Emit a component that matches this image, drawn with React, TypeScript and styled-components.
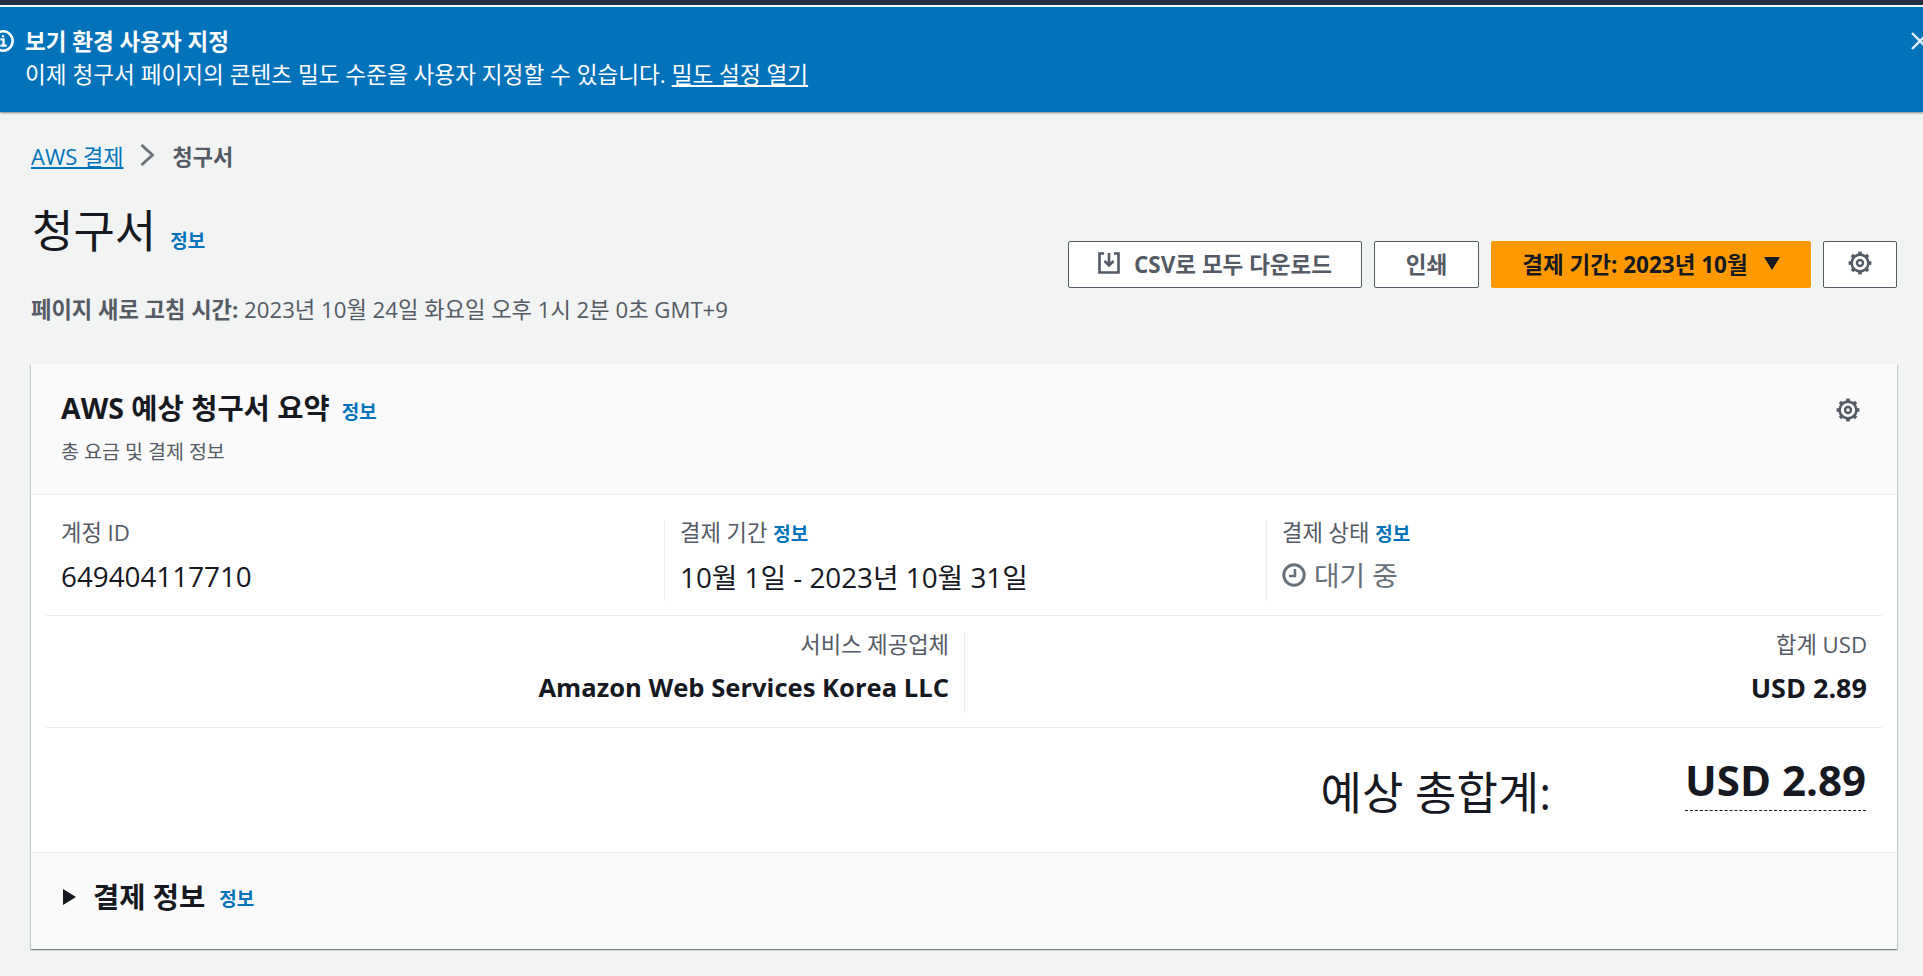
import React from 'react';
import styled, { createGlobalStyle } from 'styled-components';

const GlobalStyle = createGlobalStyle`
  html, body {
    margin: 0;
    padding: 0;
    height: 100%;
    background: #f2f3f3;
    overflow: hidden;
  }
  body {
    font-family: "Open Sans", "Noto Sans CJK KR", sans-serif;
    font-size: 17.5px;
    color: #16191f;
  }
`;

const TopStrip = styled.div`
  height: 5px;
  background: #232f3e;
  border-bottom: 2px solid #fff;
`;

const Banner = styled.div`
  height: 105px;
  box-sizing: border-box;
  background: #0272bb;
  color: #fff;
  display: flex;
  align-items: flex-start;
  padding-top: 21px;
  overflow: hidden;
  box-shadow: 0 1px 2px rgba(0, 28, 36, 0.5);
  position: relative;
`;

const BannerIcon = styled.svg`
  width: 22px;
  height: 22px;
  flex: none;
  margin: 2px 11px 0 -8px;
`;

const BannerText = styled.div`
  flex: 1;
  line-height: 27px;
`;

const BannerTitle = styled.div`
  font-weight: 700;
  font-size: 22.5px;
  margin-bottom: 6px;
`;

const BannerBody = styled.div`
  font-size: 22.6px;
`;

const BannerLink = styled.a`
  color: #fff;
  text-decoration: underline;
`;

const CloseIcon = styled.svg`
  width: 20px;
  height: 20px;
  flex: none;
  margin: 3px -7px 0 0;
`;

const Content = styled.main`
  padding: 30px 26px 0 31px;
`;

const Breadcrumbs = styled.nav`
  display: flex;
  align-items: center;
  height: 26px;
  font-size: 22px;
`;

const CrumbLink = styled.a`
  color: #0073bb;
  text-decoration: underline;
`;

const CrumbSep = styled.svg`
  width: 15px;
  height: 22px;
  margin: 0 17px;
`;

const CrumbCurrent = styled.span`
  color: #545b64;
  font-weight: 700;
`;

const PageHeader = styled.header`
  display: flex;
  justify-content: space-between;
  align-items: flex-start;
  margin-top: 38px;
`;

const HeaderMain = styled.div`
  display: flex;
  flex-direction: column;
`;

const TitleRow = styled.div`
  display: flex;
  align-items: baseline;
  gap: 14px;
  height: 50px;
  line-height: 50px;
`;

const PageTitle = styled.h1`
  margin: 0 0 0 1px;
  font-size: 45px;
  font-weight: 400;
`;

const InfoLink = styled.a`
  color: #0073bb;
  font-weight: 700;
  font-size: 19px;
`;

const RefreshLine = styled.div`
  margin-top: 40px;
  font-size: 22.2px;
  line-height: 28px;
  color: #545b64;
`;

const RefreshLabel = styled.b`
  font-weight: 700;
`;

const Actions = styled.div`
  display: flex;
  gap: 12px;
  margin-top: 35px;
`;

const Button = styled.button<{ $primary?: boolean; $width: number }>`
  width: ${(p) => p.$width}px;
  height: 47px;
  box-sizing: border-box;
  display: inline-flex;
  align-items: center;
  justify-content: center;
  gap: ${(p) => (p.$primary ? 16 : 14)}px;
  border: 1px solid ${(p) => (p.$primary ? '#ff9900' : '#545b64')};
  border-radius: 2px;
  background: ${(p) => (p.$primary ? '#ff9900' : '#fff')};
  color: ${(p) => (p.$primary ? '#16191f' : '#545b64')};
  font: inherit;
  font-size: 22.5px;
  font-weight: 700;
  padding: 0 0 3px;
`;

const Card = styled.section`
  margin-top: 40px;
  background: #fff;
  box-shadow: 0 1px 1px 0 rgba(0, 28, 36, 0.3), 1px 1px 1px 0 rgba(0, 28, 36, 0.15),
    -1px 1px 1px 0 rgba(0, 28, 36, 0.15);
`;

const CardHeader = styled.div`
  height: 131px;
  box-sizing: border-box;
  background: #fafafa;
  border-bottom: 1px solid #eaeded;
  padding: 26px 37px 0 30px;
  display: flex;
  justify-content: space-between;
  align-items: flex-start;
`;

const CardTitleRow = styled.div`
  display: flex;
  align-items: baseline;
  gap: 12px;
  line-height: 36px;
`;

const CardTitle = styled.h2`
  margin: 0;
  font-size: 28.5px;
  font-weight: 700;
`;

const CardSubtitle = styled.div`
  margin-top: 9px;
  color: #545b64;
  font-size: 19.5px;
  line-height: 26px;
`;

const GearSlot = styled.div`
  margin-top: 8px;
  display: flex;
`;

const Section = styled.div<{ $height: number }>`
  height: ${(p) => p.$height}px;
  box-sizing: border-box;
  margin: 0 15px;
  border-bottom: 1px solid #eaeded;
  display: grid;
`;

const MetaGrid = styled(Section)`
  padding-top: 25px;
  grid-template-columns: 618px 602px 1fr;
`;

const ProviderGrid = styled(Section)`
  padding-top: 16px;
  grid-template-columns: 918px 1fr;
`;

const MetaCell = styled.div<{ $divider?: boolean; $right?: boolean }>`
  height: 81px;
  box-sizing: border-box;
  padding: 0 15px;
  border-left: ${(p) => (p.$divider ? '1px solid #eaeded' : 'none')};
  text-align: ${(p) => (p.$right ? 'right' : 'left')};
`;

const FieldLabel = styled.div`
  margin-top: -2px;
  color: #545b64;
  font-size: 22.2px;
  line-height: 30px;
`;

const FieldValue = styled.div`
  margin-top: 10px;
  font-size: 27.8px;
  line-height: 36px;
`;

const StatusValue = styled(FieldValue)`
  margin-top: 8px;
  display: flex;
  align-items: center;
  gap: 8px;
  color: #687078;
`;

const ProviderValue = styled.div<{ $size: number }>`
  margin-top: 11px;
  font-size: ${(p) => p.$size}px;
  font-weight: 700;
  line-height: 34px;
`;

const TotalRow = styled.div`
  height: 124px;
  box-sizing: border-box;
  padding: 25px 31px 0 0;
  display: flex;
  justify-content: flex-end;
  align-items: flex-start;
  gap: 134px;
`;

const TotalLabel = styled.div`
  margin-top: 12px;
  font-size: 45px;
  line-height: 56px;
`;

const TotalValue = styled.div`
  font-size: 42px;
  font-weight: 700;
  line-height: 54px;
  padding-bottom: 3px;
  border-bottom: 1px dashed #16191f;
`;

const CardFooter = styled.div`
  height: 97px;
  box-sizing: border-box;
  background: #fafafa;
  border-top: 1px solid #eaeded;
  padding: 0 0 9px 32px;
  display: flex;
  align-items: center;
`;

const Caret = styled.svg`
  width: 13px;
  height: 16px;
  margin-right: 17px;
`;

const FooterTitle = styled.h3`
  margin: 0 14px 0 0;
  font-size: 28.5px;
  font-weight: 700;
  line-height: 36px;
`;

const FooterInfo = styled(InfoLink)`
  margin-top: 3px;
`;

function GearIcon() {
  const teeth = [0, 45, 90, 135, 180, 225, 270, 315];
  return (
    <svg width="24" height="24" viewBox="0 0 24 24" fill="none" stroke="#545b64">
      <circle cx="12" cy="12" r="8.4" strokeWidth="2.6" />
      <circle cx="12" cy="12" r="3" strokeWidth="2.4" />
      {teeth.map((a) => (
        <line key={a} x1="12" y1="0.6" x2="12" y2="4" strokeWidth="3.6" transform={`rotate(${a} 12 12)`} />
      ))}
    </svg>
  );
}

function DownloadIcon() {
  return (
    <svg width="22" height="22" viewBox="0 0 22 22" fill="none" stroke="#545b64" strokeWidth="2.6">
      <path d="M6 1.5H1.5v19h19v-19H16" />
      <path d="M11 1v12M6.5 9l4.5 4.5L15.5 9" />
    </svg>
  );
}

function ClockIcon() {
  return (
    <svg width="24" height="24" viewBox="0 0 24 24" fill="none" stroke="#687078">
      <circle cx="12" cy="12" r="10.2" strokeWidth="3" />
      <path d="M13 6v7H7" strokeWidth="2.6" />
    </svg>
  );
}

export default function App() {
  return (
    <>
      <GlobalStyle />
      <TopStrip />
      <Banner>
        <BannerIcon viewBox="0 0 21 21" fill="none" stroke="#fff">
          <circle cx="10.5" cy="10.5" r="9.2" strokeWidth="2.4" />
          <path d="M8 9h3v6M8 15h6M10.5 5v2" strokeWidth="2.2" />
        </BannerIcon>
        <BannerText>
          <BannerTitle>보기 환경 사용자 지정</BannerTitle>
          <BannerBody>
            이제 청구서 페이지의 콘텐츠 밀도 수준을 사용자 지정할 수 있습니다.{' '}
            <BannerLink>밀도 설정 열기</BannerLink>
          </BannerBody>
        </BannerText>
        <CloseIcon viewBox="0 0 20 20" fill="none" stroke="#e4eef5" strokeWidth="2.4">
          <path d="M2 2l16 16M18 2L2 18" />
        </CloseIcon>
      </Banner>
      <Content>
        <Breadcrumbs>
          <CrumbLink>AWS 결제</CrumbLink>
          <CrumbSep viewBox="0 0 15 22" fill="none" stroke="#687078" strokeWidth="2.8">
            <path d="M1.5 1l11 10-11 10" />
          </CrumbSep>
          <CrumbCurrent>청구서</CrumbCurrent>
        </Breadcrumbs>
        <PageHeader>
          <HeaderMain>
            <TitleRow>
              <PageTitle>청구서</PageTitle>
              <InfoLink>정보</InfoLink>
            </TitleRow>
            <RefreshLine>
              <RefreshLabel>페이지 새로 고침 시간:</RefreshLabel> 2023년 10월 24일 화요일 오후 1시 2분 0초 GMT+9
            </RefreshLine>
          </HeaderMain>
          <Actions>
            <Button $width={294}>
              <DownloadIcon />
              CSV로 모두 다운로드
            </Button>
            <Button $width={105}>인쇄</Button>
            <Button $primary $width={320}>
              결제 기간: 2023년 10월
              <svg width="16" height="13" viewBox="0 0 16 13" fill="#16191f">
                <path d="M0 0h16L8 13z" />
              </svg>
            </Button>
            <Button $width={74}>
              <GearIcon />
            </Button>
          </Actions>
        </PageHeader>
        <Card>
          <CardHeader>
            <div>
              <CardTitleRow>
                <CardTitle>AWS 예상 청구서 요약</CardTitle>
                <InfoLink>정보</InfoLink>
              </CardTitleRow>
              <CardSubtitle>총 요금 및 결제 정보</CardSubtitle>
            </div>
            <GearSlot>
              <GearIcon />
            </GearSlot>
          </CardHeader>
          <MetaGrid $height={121}>
            <MetaCell>
              <FieldLabel>계정 ID</FieldLabel>
              <FieldValue>649404117710</FieldValue>
            </MetaCell>
            <MetaCell $divider>
              <FieldLabel>
                결제 기간 <InfoLink>정보</InfoLink>
              </FieldLabel>
              <FieldValue>10월 1일 - 2023년 10월 31일</FieldValue>
            </MetaCell>
            <MetaCell $divider>
              <FieldLabel>
                결제 상태 <InfoLink>정보</InfoLink>
              </FieldLabel>
              <StatusValue>
                <ClockIcon />
                대기 중
              </StatusValue>
            </MetaCell>
          </MetaGrid>
          <ProviderGrid $height={112}>
            <MetaCell $right>
              <FieldLabel>서비스 제공업체</FieldLabel>
              <ProviderValue $size={25.6}>Amazon Web Services Korea LLC</ProviderValue>
            </MetaCell>
            <MetaCell $divider $right>
              <FieldLabel>합계 USD</FieldLabel>
              <ProviderValue $size={27}>USD 2.89</ProviderValue>
            </MetaCell>
          </ProviderGrid>
          <TotalRow>
            <TotalLabel>예상 총합계:</TotalLabel>
            <TotalValue>USD 2.89</TotalValue>
          </TotalRow>
          <CardFooter>
            <Caret viewBox="0 0 13 16" fill="#16191f">
              <path d="M0 0l13 8-13 8z" />
            </Caret>
            <FooterTitle>결제 정보</FooterTitle>
            <FooterInfo>정보</FooterInfo>
          </CardFooter>
        </Card>
      </Content>
    </>
  );
}
